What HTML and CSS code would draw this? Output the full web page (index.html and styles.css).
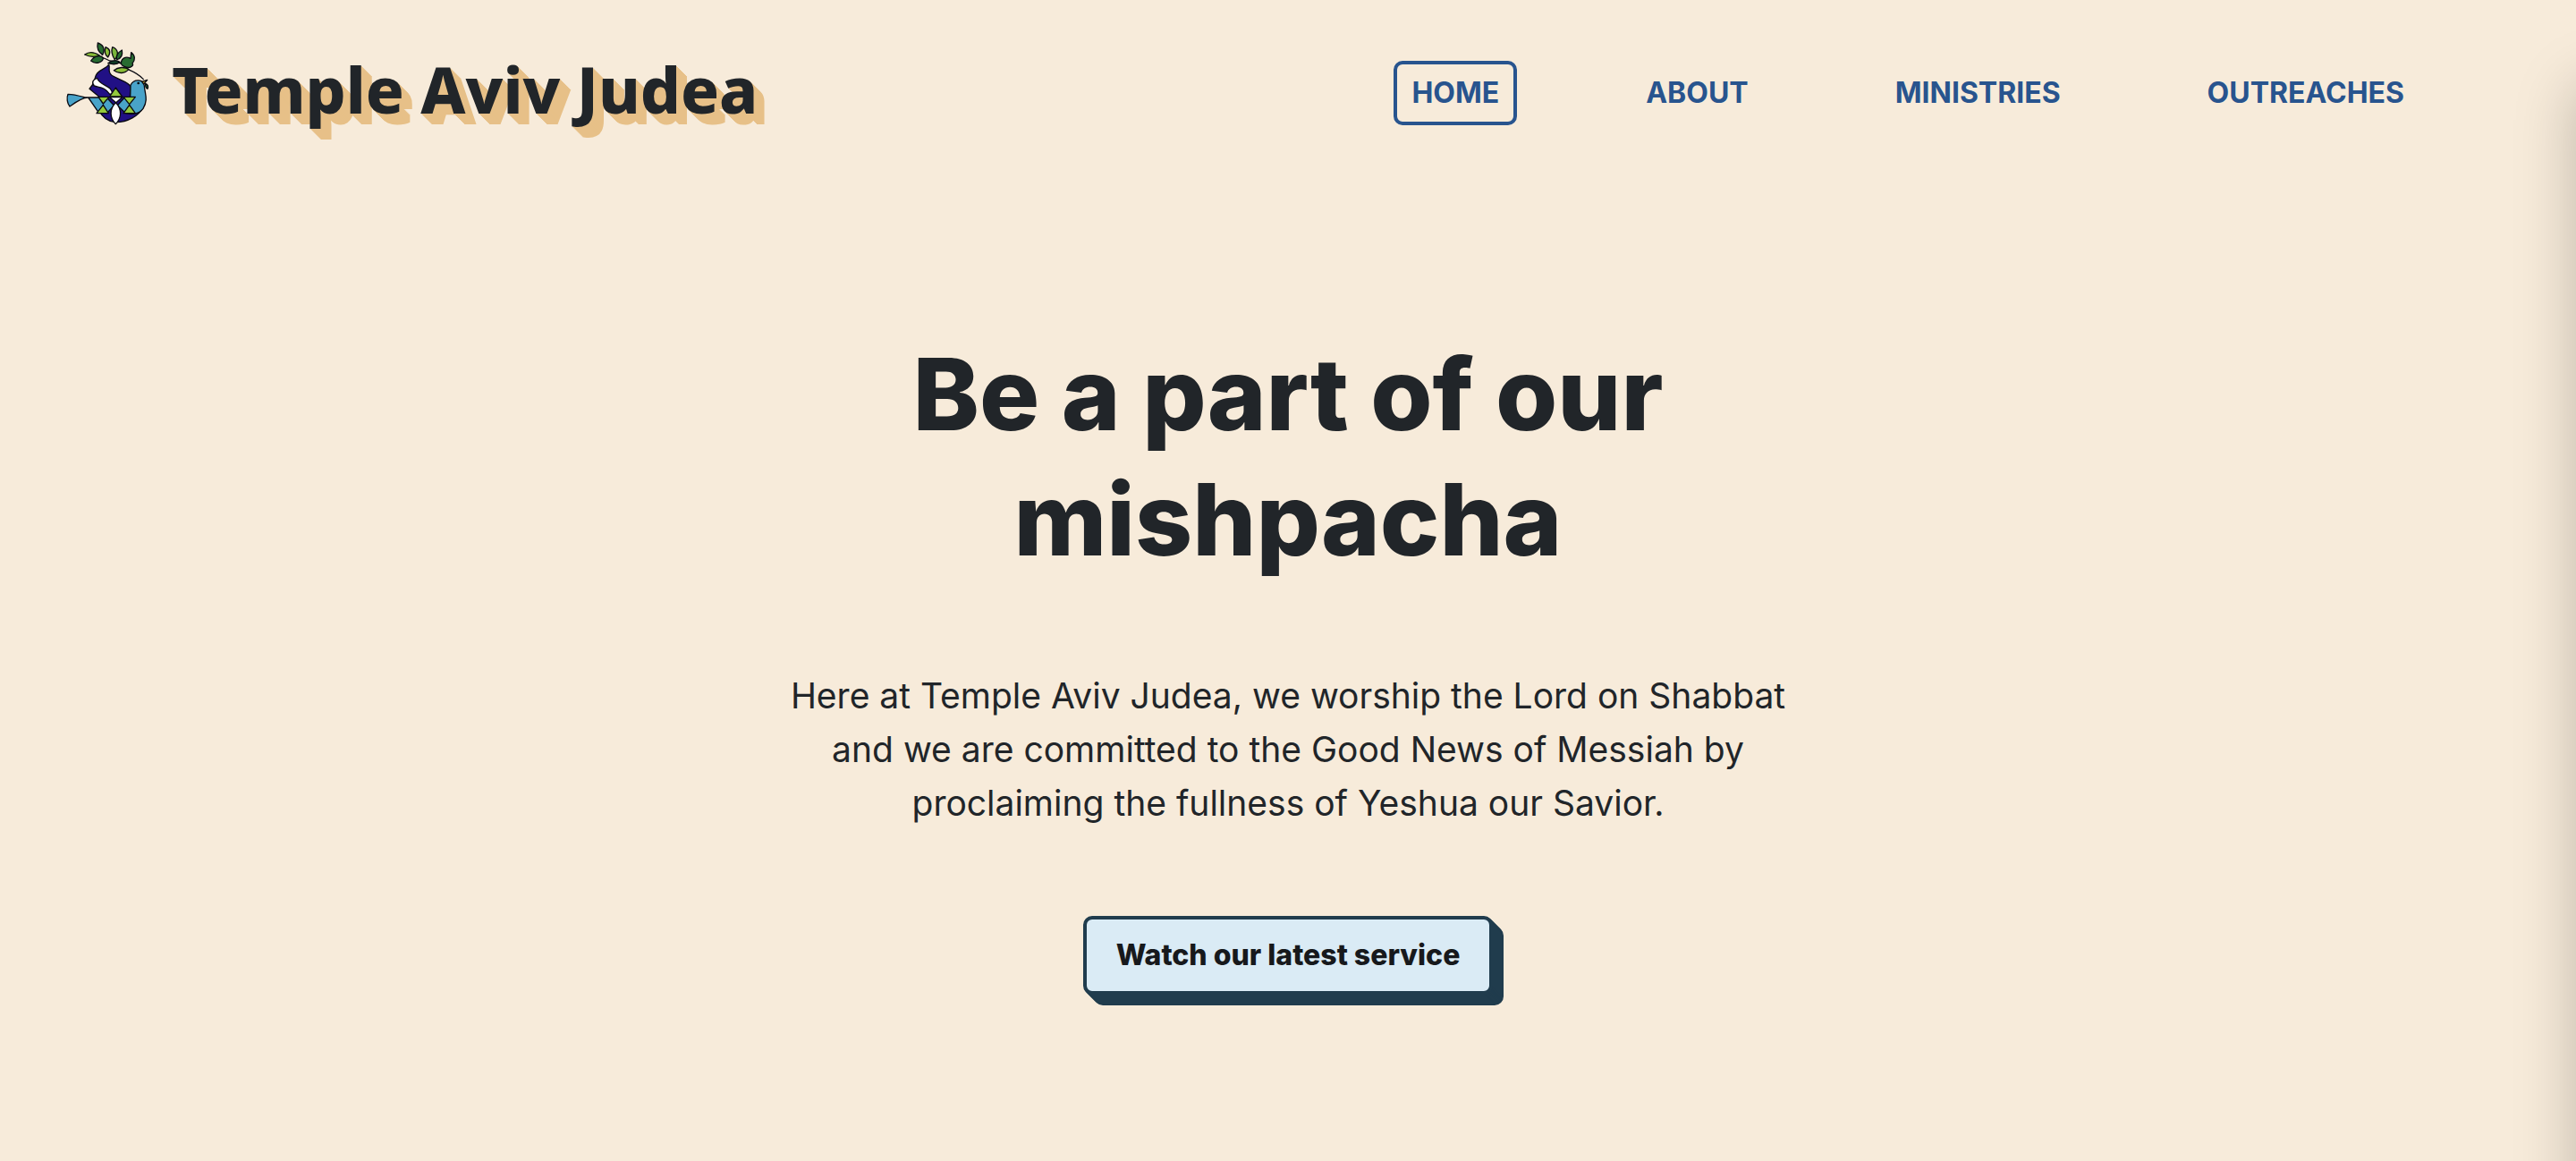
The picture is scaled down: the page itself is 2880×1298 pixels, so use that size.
FILE: index.html
```html
<!DOCTYPE html>
<html lang="en">
<head>
<meta charset="utf-8">
<meta name="viewport" content="width=device-width, initial-scale=1">
<title>Temple Aviv Judea</title>
<link rel="stylesheet" href="styles.css">
</head>
<body>
<header class="header">
  <a class="brand" href="#">
    <svg class="logo" viewBox="0 0 360 348" aria-hidden="true">
      <g stroke="#0b0b12" stroke-width="4" stroke-linejoin="round" stroke-linecap="round">
        <path fill="none" d="M128 74Q165 84 188 96Q232 98 250 125Q285 140 301 158"/>
        <path fill="#211085" d="M185 108C178 122 160 122 146 138C134 152 142 168 120 190L152 216V262C166 290 184 300 208 302C250 302 284 280 300 254L256 216L258 182C250 166 214 158 194 144C180 132 190 120 185 108Z"/>
        <path fill="#fff" d="M146 154C132 158 126 168 136 180C156 186 172 184 188 208L196 206C198 178 154 180 146 154Z"/>
        <path fill="#49a3c9" d="M152 219H178L208 252L238 219H257L258 178C268 156 302 156 304 180C306 208 318 226 300 256C282 280 256 274 242 272L208 240L178 272L150 268L116 219C96 218 72 236 54 249C45 238 43 220 48 208C68 208 88 214 106 219Z"/>
        <path fill="#94c93d" d="M208 186L230 216H188Z"/>
        <path fill="#94c93d" d="M150 217H186L166 240ZM144 272L166 244L184 272ZM234 217H274L254 242ZM234 272L254 244L274 272Z"/>
        <path fill="#fff" d="M188 218H230L209 236Z"/>
        <path fill="#fff" d="M208 236C186 258 188 288 208 308C228 288 230 258 208 236Z"/>
        <path fill="#8abd38" d="M104 75C122 62 142 70 154 78C138 84 122 84 104 75Z"/>
        <path fill="#276b31" d="M125 96C136 78 158 76 166 86C166 100 142 110 125 96Z"/>
        <path fill="#276b31" d="M148 36C166 42 174 56 164 76C152 68 144 54 148 36Z"/>
        <path fill="#8abd38" d="M174 50C190 56 192 68 182 84C170 74 170 62 174 50Z"/>
        <path fill="#79b43a" d="M197 50C216 56 220 76 205 92C196 78 192 64 197 50Z"/>
        <path fill="#276b31" d="M212 92C208 78 216 68 229 60C232 76 226 88 212 92Z"/>
        <path fill="#123f27" d="M182 104Q204 88 222 100Q210 112 182 104Z"/>
        <path fill="#276b31" d="M226 106C226 86 242 80 258 88L260 68C274 78 274 94 264 104Q270 112 256 118Q236 120 226 106Z"/>
        <path fill="#8abd38" d="M202 128C216 116 238 116 252 124C238 140 218 140 202 128Z"/>
        <path fill="#d9b62e" d="M296 166L314 160L302 174Z"/>
        <path fill="#276b31" d="M308 172Q320 178 315 190Q306 184 308 172Z"/>
      </g>
      <circle cx="284" cy="171" r="4"/>
    </svg>
    <span class="brand-name">Temple Aviv Judea</span>
  </a>
  <nav class="nav">
    <a class="nav-link active" href="#">HOME</a>
    <a class="nav-link" href="#">ABOUT</a>
    <a class="nav-link" href="#">MINISTRIES</a>
    <a class="nav-link" href="#">OUTREACHES</a>
  </nav>
</header>
<main class="hero">
  <h1 class="hero-title">Be a part of our mishpacha</h1>
  <p class="hero-text">Here at Temple Aviv Judea, we worship the Lord on Shabbat and we are committed to the Good News of Messiah by proclaiming the fullness of Yeshua our Savior.</p>
  <button class="hero-button" type="button">Watch our latest service</button>
</main>
<aside class="drawer"></aside>
</body>
</html>
```
FILE: styles.css
```css
* { box-sizing: border-box; }
body {
  margin: 0;
  min-height: 100vh;
  overflow-x: hidden;
  background: #f7ebda;
  color: #212529;
  font-family: Inter, "Liberation Sans", sans-serif;
}
.header {
  display: flex;
  align-items: center;
  justify-content: space-between;
  height: 208px;
  padding: 0 172px 0 60px;
}
.brand {
  display: flex;
  align-items: center;
  gap: 12px;
  color: inherit;
  text-decoration: none;
}
.logo { width: 120px; height: 116px; margin-bottom: 20px; }
.brand-name {
  padding-bottom: 8px;
  font-family: "Noto Sans", sans-serif;
  font-size: 71px;
  font-weight: 800;
  line-height: 100px;
  white-space: nowrap;
  text-shadow: 1px 1px #e7c088, 2px 2px #e7c088, 3px 3px #e7c088, 4px 4px #e7c088,
    5px 5px #e7c088, 6px 6px #e7c088, 7px 7px #e7c088, 8px 8px #e7c088,
    9px 9px #e7c088, 10px 10px #e7c088, 11px 11px #e7c088, 12px 12px #e7c088;
}
.nav { display: flex; gap: 124px; }
.nav-link {
  padding: 8px 16px;
  border: 4px solid transparent;
  border-radius: 10px;
  color: #28548e;
  font-size: 32px;
  font-weight: 700;
  line-height: 48px;
  text-decoration: none;
}
.active { border-color: #28548e; }
.hero {
  display: flex;
  flex-direction: column;
  align-items: center;
  padding: 162px 40px 0;
  text-align: center;
}
.hero-title {
  max-width: 1160px;
  margin: 0 0 98px;
  font-size: 112px;
  font-weight: 800;
  line-height: 140px;
}
.hero-text {
  max-width: 1160px;
  margin: 0 0 96px;
  font-size: 39px;
  line-height: 60px;
}
.hero-button {
  padding: 16px 33px;
  border: 4px solid #203c4d;
  border-radius: 10px;
  background: #daebf5;
  color: #17191c;
  font: 800 32px/48px Inter, "Liberation Sans", sans-serif;
  box-shadow: 1px 1px #203c4d, 2px 2px #203c4d, 3px 3px #203c4d, 4px 4px #203c4d,
    5px 5px #203c4d, 6px 6px #203c4d, 7px 7px #203c4d, 8px 8px #203c4d,
    9px 9px #203c4d, 10px 10px #203c4d, 11px 11px #203c4d, 12px 12px #203c4d;
}
.drawer {
  position: fixed;
  top: 80px;
  bottom: -120px;
  left: 100%;
  width: 600px;
  box-shadow: 0 16px 64px rgba(0, 0, 0, 0.22);
}
```
